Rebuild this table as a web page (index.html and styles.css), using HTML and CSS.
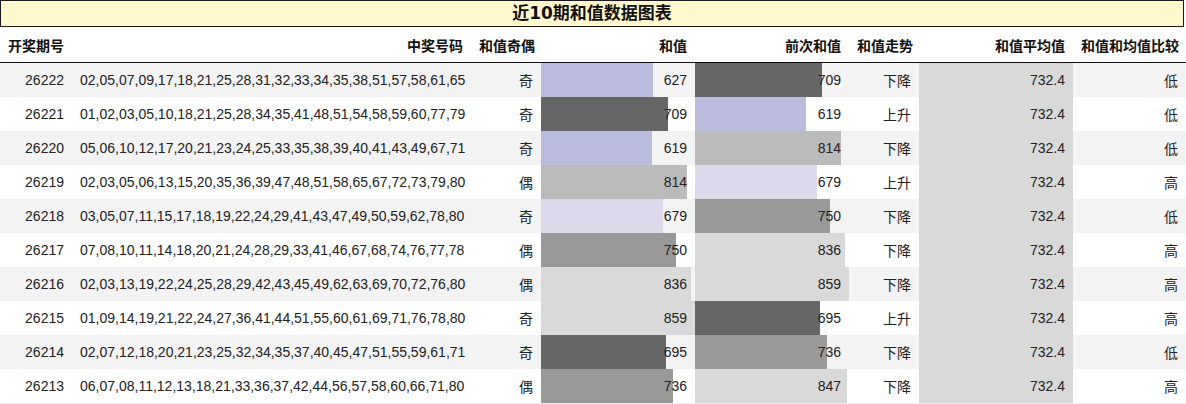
FILE: index.html
```html
<!DOCTYPE html>
<html lang="zh-CN">
<head>
<meta charset="utf-8">
<title>近10期和值数据图表</title>
<link rel="stylesheet" href="styles.css">
</head>
<body>
<div class="wrap">
  <div class="title">近10期和值数据图表</div>
  <table class="tbl">
    <colgroup>
      <col class="w-qh"><col class="w-hm"><col class="w-jo"><col class="w-bar"><col class="w-bar"><col class="w-zs"><col class="w-bar"><col class="w-bj">
    </colgroup>
    <thead>
      <tr>
        <th>开奖期号</th><th>中奖号码</th><th>和值奇偶</th><th>和值</th><th>前次和值</th><th>和值走势</th><th>和值平均值</th><th>和值和均值比较</th>
      </tr>
    </thead>
    <tbody>
      <tr>
        <td>26222</td><td>02,05,07,09,17,18,21,25,28,31,32,33,34,35,38,51,57,58,61,65</td><td>奇</td>
        <td class="bc"><div class="cellbar"><div class="bar c-lav" style="width:112.4px"></div><span class="val">627</span></div></td>
        <td class="bc"><div class="cellbar"><div class="bar c-dk" style="width:127.1px"></div><span class="val">709</span></div></td>
        <td>下降</td><td class="avg">732.4</td><td>低</td>
      </tr>
      <tr>
        <td>26221</td><td>01,02,03,05,10,18,21,25,28,34,35,41,48,51,54,58,59,60,77,79</td><td>奇</td>
        <td class="bc"><div class="cellbar"><div class="bar c-dk" style="width:127.1px"></div><span class="val">709</span></div></td>
        <td class="bc"><div class="cellbar"><div class="bar c-lav" style="width:111px"></div><span class="val">619</span></div></td>
        <td>上升</td><td class="avg">732.4</td><td>低</td>
      </tr>
      <tr>
        <td>26220</td><td>05,06,10,12,17,20,21,23,24,25,33,35,38,39,40,41,43,49,67,71</td><td>奇</td>
        <td class="bc"><div class="cellbar"><div class="bar c-lav" style="width:111px"></div><span class="val">619</span></div></td>
        <td class="bc"><div class="cellbar"><div class="bar c-md" style="width:145.9px"></div><span class="val">814</span></div></td>
        <td>下降</td><td class="avg">732.4</td><td>低</td>
      </tr>
      <tr>
        <td>26219</td><td>02,03,05,06,13,15,20,35,36,39,47,48,51,58,65,67,72,73,79,80</td><td>偶</td>
        <td class="bc"><div class="cellbar"><div class="bar c-md" style="width:145.9px"></div><span class="val">814</span></div></td>
        <td class="bc"><div class="cellbar"><div class="bar c-lt" style="width:121.7px"></div><span class="val">679</span></div></td>
        <td>上升</td><td class="avg">732.4</td><td>高</td>
      </tr>
      <tr>
        <td>26218</td><td>03,05,07,11,15,17,18,19,22,24,29,41,43,47,49,50,59,62,78,80</td><td>奇</td>
        <td class="bc"><div class="cellbar"><div class="bar c-lt" style="width:121.7px"></div><span class="val">679</span></div></td>
        <td class="bc"><div class="cellbar"><div class="bar c-gr" style="width:134.5px"></div><span class="val">750</span></div></td>
        <td>下降</td><td class="avg">732.4</td><td>低</td>
      </tr>
      <tr>
        <td>26217</td><td>07,08,10,11,14,18,20,21,24,28,29,33,41,46,67,68,74,76,77,78</td><td>偶</td>
        <td class="bc"><div class="cellbar"><div class="bar c-gr" style="width:134.5px"></div><span class="val">750</span></div></td>
        <td class="bc"><div class="cellbar"><div class="bar c-lg" style="width:149.9px"></div><span class="val">836</span></div></td>
        <td>下降</td><td class="avg">732.4</td><td>高</td>
      </tr>
      <tr>
        <td>26216</td><td>02,03,13,19,22,24,25,28,29,42,43,45,49,62,63,69,70,72,76,80</td><td>偶</td>
        <td class="bc"><div class="cellbar"><div class="bar c-lg" style="width:149.9px"></div><span class="val">836</span></div></td>
        <td class="bc"><div class="cellbar"><div class="bar c-lg" style="width:154px"></div><span class="val">859</span></div></td>
        <td>下降</td><td class="avg">732.4</td><td>高</td>
      </tr>
      <tr>
        <td>26215</td><td>01,09,14,19,21,22,24,27,36,41,44,51,55,60,61,69,71,76,78,80</td><td>奇</td>
        <td class="bc"><div class="cellbar"><div class="bar c-lg" style="width:154px"></div><span class="val">859</span></div></td>
        <td class="bc"><div class="cellbar"><div class="bar c-dk" style="width:124.6px"></div><span class="val">695</span></div></td>
        <td>上升</td><td class="avg">732.4</td><td>高</td>
      </tr>
      <tr>
        <td>26214</td><td>02,07,12,18,20,21,23,25,32,34,35,37,40,45,47,51,55,59,61,71</td><td>奇</td>
        <td class="bc"><div class="cellbar"><div class="bar c-dk" style="width:124.6px"></div><span class="val">695</span></div></td>
        <td class="bc"><div class="cellbar"><div class="bar c-gr" style="width:132px"></div><span class="val">736</span></div></td>
        <td>下降</td><td class="avg">732.4</td><td>低</td>
      </tr>
      <tr>
        <td>26213</td><td>06,07,08,11,12,13,18,21,33,36,37,42,44,56,57,58,60,66,71,80</td><td>偶</td>
        <td class="bc"><div class="cellbar"><div class="bar c-gr" style="width:132px"></div><span class="val">736</span></div></td>
        <td class="bc"><div class="cellbar"><div class="bar c-lg" style="width:151.9px"></div><span class="val">847</span></div></td>
        <td>下降</td><td class="avg">732.4</td><td>高</td>
      </tr>
    </tbody>
  </table>
</div>
</body>
</html>
```

FILE: styles.css
```css
html, body {
  margin: 0;
  padding: 0;
  background: #ffffff;
}

.wrap {
  width: 1186px;
  font-family: "Liberation Sans", "Noto Sans CJK SC", sans-serif;
  color: #222222;
}

.title {
  box-sizing: border-box;
  width: 1184px;
  height: 27px;
  border: 1px solid #1a1a1a;
  background: #fff8cf;
  font-family: "DejaVu Sans", "Noto Sans CJK SC", sans-serif;
  font-weight: bold;
  font-size: 17px;
  line-height: 25px;
  text-align: center;
  color: #111111;
}

.tbl {
  width: 1186px;
  table-layout: fixed;
  border-collapse: collapse;
  border-spacing: 0;
  font-size: 14px;
  border-bottom: 1px solid #ededed;
}

.w-qh { width: 72px; }
.w-hm { width: 399px; }
.w-jo { width: 70px; }
.w-bar { width: 154px; }
.w-zs { width: 70px; }
.w-bj { width: 113px; }

.tbl th {
  height: 35px;
  padding: 0 8px;
  text-align: right;
  font-weight: bold;
  font-size: 14px;
  color: #111111;
  border-bottom: 1px solid #111111;
  white-space: nowrap;
  vertical-align: middle;
}

.tbl th:first-child {
  text-align: left;
}

.tbl td {
  height: 34px;
  padding: 0 8px;
  text-align: right;
  white-space: nowrap;
  vertical-align: middle;
}

.tbl tbody tr:nth-child(odd) {
  background: #f3f3f3;
}

.tbl td.avg {
  background: #d9d9d9;
}

.tbl td.bc {
  padding: 0;
}

.cellbar {
  display: grid;
  height: 34px;
}

.bar {
  grid-area: 1 / 1;
  height: 34px;
  justify-self: start;
}

.val {
  grid-area: 1 / 1;
  justify-self: end;
  align-self: center;
  padding-right: 8px;
  position: relative;
}

.c-lav { background: #bbbbdd; }
.c-lt  { background: #dcdaea; }
.c-dk  { background: #666666; }
.c-md  { background: #bbbbbb; }
.c-gr  { background: #999999; }
.c-lg  { background: #d9d9d9; }
```
